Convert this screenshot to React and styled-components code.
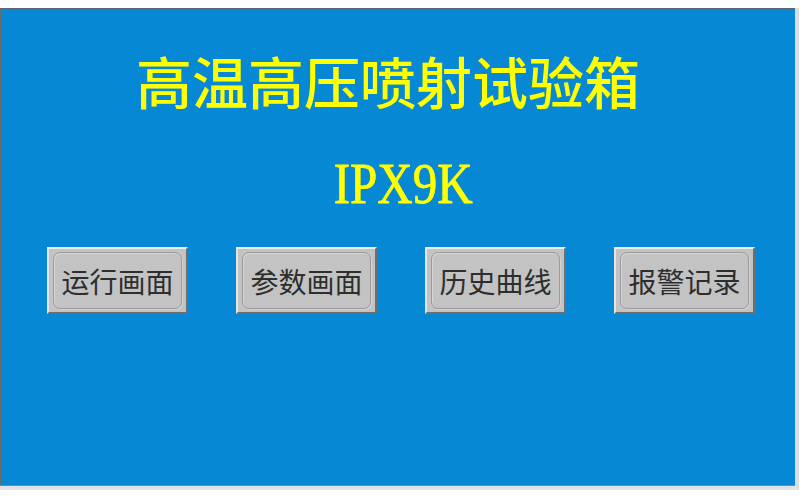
import React from 'react'
import styled, { createGlobalStyle } from 'styled-components'

const GlobalStyle = createGlobalStyle`
    html, body {
        margin: 0;
        padding: 0;
        background: #ffffff;
    }
    body {
        font-family: "Noto Sans CJK SC", "Noto Sans", sans-serif;
    }
`

const buttons = ['运行画面', '参数画面', '历史曲线', '报警记录']

function App() {
    return (
        <>
            <GlobalStyle />
            <Page>
                <Frame>
                    <Panel>
                        <Title>高温高压喷射试验箱</Title>
                        <Model>IPX9K</Model>
                        <ButtonRow>
                            {buttons.map(label => (
                                <NavButton key={label}>
                                    <NavFace>{label}</NavFace>
                                </NavButton>
                            ))}
                        </ButtonRow>
                    </Panel>
                </Frame>
            </Page>
        </>
    )
}

export default App

const Page = styled.div`
    width: 800px;
    height: 500px;
    padding-top: 8px;
    box-sizing: border-box;
    overflow: hidden;
`

const Frame = styled.div`
    width: 799px;
    border-right: 4px solid #dcdde3;
    border-bottom: 4px solid #e2e3e8;
    box-sizing: border-box;
`

const Panel = styled.div`
    height: 478px;
    background: #0688d4;
    border-top: 1px solid #5a6470;
    border-left: 1px solid #6a6a6a;
    border-bottom: 1px solid #3a9be0;
    box-sizing: border-box;
    display: flex;
    flex-direction: column;
`

const Title = styled.div`
    margin-top: 43px;
    padding-right: 20px;
    text-align: center;
    font-family: "Noto Sans CJK SC", sans-serif;
    font-weight: 500;
    font-size: 56px;
    line-height: 56px;
    color: #ffff00;
`

const Model = styled.div`
    margin-top: 47px;
    padding-left: 12px;
    text-align: center;
    font-family: "Liberation Serif", serif;
    font-size: 57px;
    line-height: 57px;
    color: #ffff00;
    -webkit-text-stroke: 0.8px #ffff00;
    transform: scaleX(0.86);
`

const ButtonRow = styled.div`
    margin-top: 35px;
    padding-left: 46px;
    display: flex;
    gap: 48px;
`

const NavButton = styled.div`
    width: 141px;
    height: 67px;
    box-sizing: border-box;
    background: #c3c3c3;
    border-top: 2px solid #ececec;
    border-left: 2px solid #e4e4e4;
    border-right: 2px solid #6e6e6e;
    border-bottom: 2px solid #6e6e6e;
    padding: 3px 4px;
    display: flex;
`

const NavFace = styled.div`
    flex: 1;
    border: 1px solid #9a9a9a;
    border-radius: 7px;
    box-shadow: inset 1px 1px 0 #d6d6d6, 1px 1px 0 #d4d4d4;
    display: flex;
    align-items: center;
    justify-content: center;
    font-family: "Noto Sans CJK SC", sans-serif;
    font-size: 28px;
    color: #2e2e2e;
`
